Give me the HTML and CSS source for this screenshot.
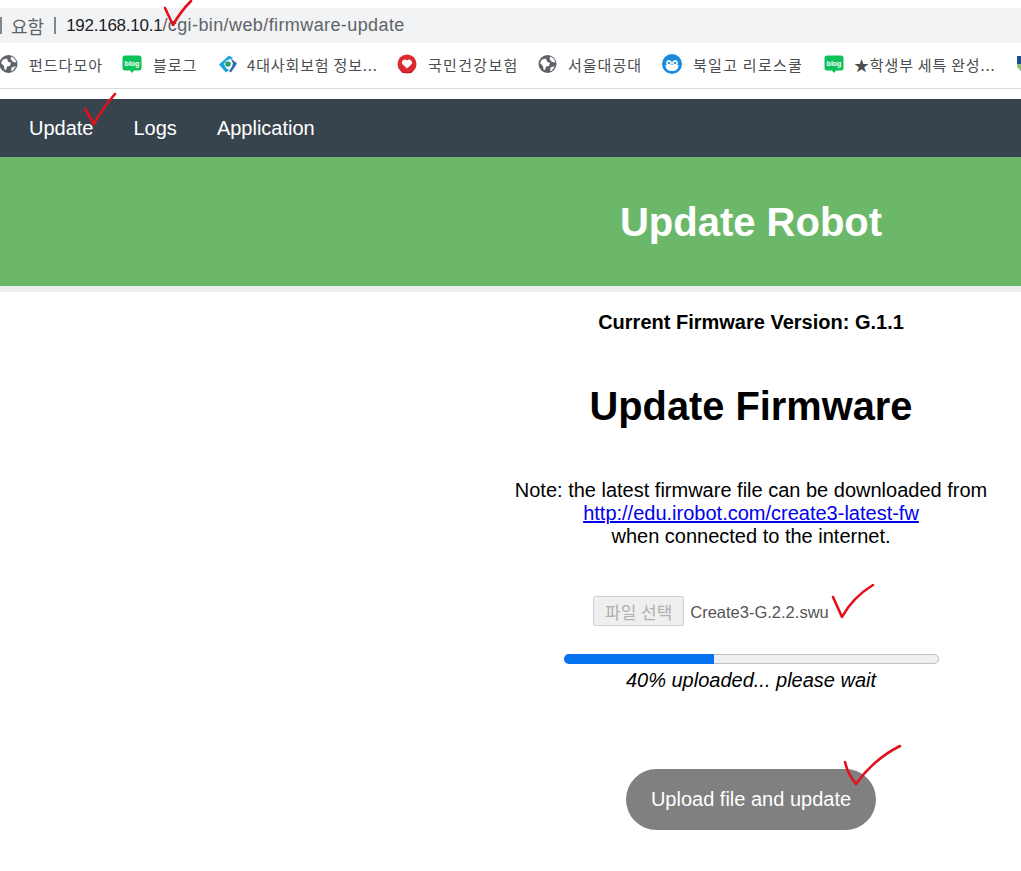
FILE: index.html
```html
<!DOCTYPE html>
<html lang="ko">
<head>
<meta charset="utf-8">
<title>Update Robot</title>
<link rel="stylesheet" href="styles.css">
</head>
<body>
<header class="chrome">
  <div class="address">
    <span class="sep-left"></span>
    <span class="secure">요함</span>
    <span class="sep"></span>
    <span class="url"><span class="host">192.168.10.1</span><span class="path">/cgi-bin/web/firmware-update</span></span>
  </div>
  <div class="bookmarks">
    <a class="bm bm-1"><svg class="ico" viewBox="0 0 20 20"><use href="#globe"/></svg><span>펀드다모아</span></a>
    <a class="bm bm-2"><svg class="ico" viewBox="0 0 20 20"><use href="#blog"/><text class="blog-text" x="10" y="11.500">blog</text></svg><span>블로그</span></a>
    <a class="bm bm-3"><svg class="ico" viewBox="0 0 20 20"><path d="M1 10.500 11 1.500l4 2.500-6.500 2.500L6 10l2 4 3 2-3 2.500z" fill="#16a5e0"/><path d="M19 9.500 12.500 4 15 9.500l-1 3-3 4.500 2 1.500z" fill="#2a6fb5"/><circle cx="10" cy="10" r="2.800" fill="#2f9e6e"/></svg><span class="tight">4대사회보험 정보...</span></a>
    <a class="bm bm-4"><svg class="ico" viewBox="0 0 20 20"><circle cx="10" cy="10" r="9.500" fill="#dc2a2e"/><path d="M10 14.500 5.200 10a3 3 0 0 1 4.800-3.500A3 3 0 0 1 14.800 10z" fill="#fff"/><path d="M4 16.500q6 4 12 0l-1.500 2.500h-9z" fill="#a81c20"/></svg><span class="wide">국민건강보험</span></a>
    <a class="bm bm-5"><svg class="ico" viewBox="0 0 20 20"><use href="#globe"/></svg><span>서울대공대</span></a>
    <a class="bm bm-6"><svg class="ico" viewBox="0 0 20 20"><circle cx="10" cy="10" r="10" fill="#1b8be0"/><path d="M3.500 11q0 6 6.500 6t6.500-6z" fill="#fff"/><circle cx="7" cy="9" r="2.500" fill="#dff0fb" stroke="#fff" stroke-width=".8"/><circle cx="13" cy="9" r="2.500" fill="#dff0fb" stroke="#fff" stroke-width=".8"/><circle cx="7" cy="9" r="1" fill="#1b6bb0"/><circle cx="13" cy="9" r="1" fill="#1b6bb0"/></svg><span class="wide">북일고 리로스쿨</span></a>
    <a class="bm bm-7"><svg class="ico" viewBox="0 0 20 20"><use href="#blog"/><text class="blog-text" x="10" y="11.500">blog</text></svg><span class="tight">★학생부 세특 완성...</span></a>
    <a class="bm bm-8"><svg class="ico" viewBox="0 0 20 20"><path d="M2 2h16v10q-3 5-8 7-5-2-8-7z" fill="#1f4f8f"/><path d="M2 10h16v2q-3 5-8 7-5-2-8-7z" fill="#8cc26a"/></svg></a>
  </div>
</header>

<nav class="topnav">
  <a class="nav-link">Update</a>
  <a class="nav-link">Logs</a>
  <a class="nav-link">Application</a>
</nav>

<section class="banner"><h1>Update Robot</h1></section>

<main class="content">
  <p class="version">Current Firmware Version: G.1.1</p>
  <h2>Update Firmware</h2>
  <p class="note">Note: the latest firmware file can be downloaded from<br>
    <a class="link">http://edu.irobot.com/create3-latest-fw</a><br>
    when connected to the internet.</p>
  <div class="file-row">
    <span class="file-btn">파일 선택</span>
    <span class="file-name">Create3-G.2.2.swu</span>
  </div>
  <div class="progress"><div class="progress-fill" style="width:40%"></div></div>
  <p class="status">40% uploaded... please wait</p>
  <span class="upload">Upload file and update</span>
</main>

<svg class="hidden-defs" aria-hidden="true">
  <symbol id="globe" viewBox="0 0 20 20">
    <circle cx="9.500" cy="10" r="9" fill="#5f6368"/>
    <path d="M4 5.500 8 4.500l1 3 3 1.500-1 3-3 .5-1 3.500-1.500-.5-.5-3.500-3-3zM12.500 2.500 16 5l1.500 3.500-3.500-.5-2.500-3zM12.500 13.500l4.500-1.500-3 4.500-2 .5z" fill="#fff"/>
  </symbol>
  <symbol id="blog" viewBox="0 0 20 20">
    <path d="M3 1.500h14a2.500 2.500 0 0 1 2.500 2.500v10a2.500 2.500 0 0 1-2.500 2.500h-5l-2 2.500-2-2.500H3A2.500 2.500 0 0 1 .5 14V4A2.500 2.500 0 0 1 3 1.500z" fill="#0cc15a"/>
  </symbol>
</svg>

<svg class="marks" viewBox="0 0 1021 871" aria-hidden="true">
  <path d="M165 8 173 25C178 16 184 8 191 1" />
  <path d="M85 109 94 124C100 113 107 103 115 94" />
  <path d="M833 597 842 617C849 604 860 593 873 585" />
  <path d="M845 762C847 771 851 778 856 784 866 770 882 755 900 746" />
</svg>
</body>
</html>
```

FILE: styles.css
```css
* { box-sizing: border-box; }
html, body { margin: 0; padding: 0; }
body {
  position: relative;
  height: 871px;
  overflow: hidden;
  background: #fff;
  color: #000;
  font-family: "Liberation Sans", Arial, sans-serif;
}

.chrome { padding-top: 8px; height: 89px; border-bottom: 1px solid #dadce0; }
.address {
  height: 35px;
  background: #f1f3f4;
  display: flex;
  align-items: center;
  font-size: 18px;
  color: #5f6368;
}
.sep-left, .sep { width: 2px; height: 17px; background: #80868b; flex: none; }
.secure { margin-left: 9px; font-family: "Noto Sans CJK KR", sans-serif; font-size: 18px; }
.sep { margin: 0 10px; }
.host { color: #202124; font-size: 17px; letter-spacing: -0.25px; }
.path { letter-spacing: 0.4px; }

.bookmarks {
  height: 45px;
  padding-bottom: 3px;
  display: flex;
  align-items: center;
  margin-left: -1px;
  white-space: nowrap;
  font-family: "Noto Sans CJK KR", sans-serif;
  font-size: 15px;
  color: #4a4d50;
}
.bm { display: flex; align-items: center; gap: 10px; flex: none; }
.ico { width: 20px; height: 20px; flex: none; }
.bm-1 { width: 123px; }
.bm-2 { width: 96px; gap: 11px; }
.bm-3 { width: 179px; gap: 9px; }
.bm-4 { width: 141px; gap: 11px; }
.bm-5 { width: 124px; }
.bm-6 { width: 162px; gap: 11px; }
.bm-7 { width: 191px; }
.bm span { letter-spacing: 1px; word-spacing: -1px; }
.bm .wide { letter-spacing: 1.3px; }
.bm .tight { letter-spacing: 0.85px; }
.blog-text { font-family: "Liberation Sans", Arial, sans-serif; font-size: 7px; font-weight: 700; fill: #fff; text-anchor: middle; }

.topnav {
  margin-top: 10px;
  height: 58px;
  background: #37444e;
  display: flex;
  align-items: center;
  gap: 40px;
  padding-left: 29px;
  font-size: 20px;
  color: #fff;
}

.banner {
  height: 135px;
  padding: 0 0 0 481px;
  display: flex;
  align-items: center;
  justify-content: center;
  background: #6cb86a;
  border-bottom: 6px solid #eeeeee;
}
.banner h1 { margin: 0; font-size: 40px; color: #fff; line-height: 46px; }

.content {
  margin-left: 481px;
  width: 540px;
  display: flex;
  flex-direction: column;
  align-items: center;
  text-align: center;
}
.version { margin: 19px 0 0; font-size: 20px; line-height: 23px; font-weight: 700; }
h2 { margin: 49px 0 0; font-size: 39.800px; line-height: 46px; font-weight: 700; }
.note { margin: 50px 0 0; font-size: 20px; line-height: 23px; }
.link { color: #0000ee; text-decoration: underline; }

.file-row { margin: 48px 80px 0 0; height: 30px; display: flex; align-items: center; gap: 6px; }
.file-btn {
  width: 91px;
  height: 30px;
  display: flex;
  align-items: center;
  justify-content: center;
  background: #efefef;
  border: 1px solid #d0d0d0;
  border-radius: 2px;
  font-family: "Noto Sans CJK KR", sans-serif;
  font-size: 17px;
  color: #b0b0b0;
}
.file-name { padding-top: 2px; font-size: 16.500px; color: #555; }

.progress {
  margin-top: 28px;
  width: 375px;
  height: 10px;
  border-radius: 5px;
  background: #efefef;
  box-shadow: inset 0 0 0 1px #c2c2c2;
  overflow: hidden;
}
.progress-fill { height: 10px; background: #0573f0; }
.status { margin: 5px 0 0; font-size: 20px; line-height: 23px; font-style: italic; }

.upload {
  margin-top: 77px;
  width: 250px;
  height: 61px;
  display: flex;
  align-items: center;
  justify-content: center;
  border-radius: 31px;
  background: #808080;
  color: #fff;
  font-size: 20px;
}

.hidden-defs { position: absolute; width: 0; height: 0; }
.marks { position: absolute; left: 0; top: 0; width: 1021px; height: 871px; pointer-events: none; }
.marks path { fill: none; stroke: #e3101c; stroke-width: 2.600; stroke-linecap: round; stroke-linejoin: round; }
```
